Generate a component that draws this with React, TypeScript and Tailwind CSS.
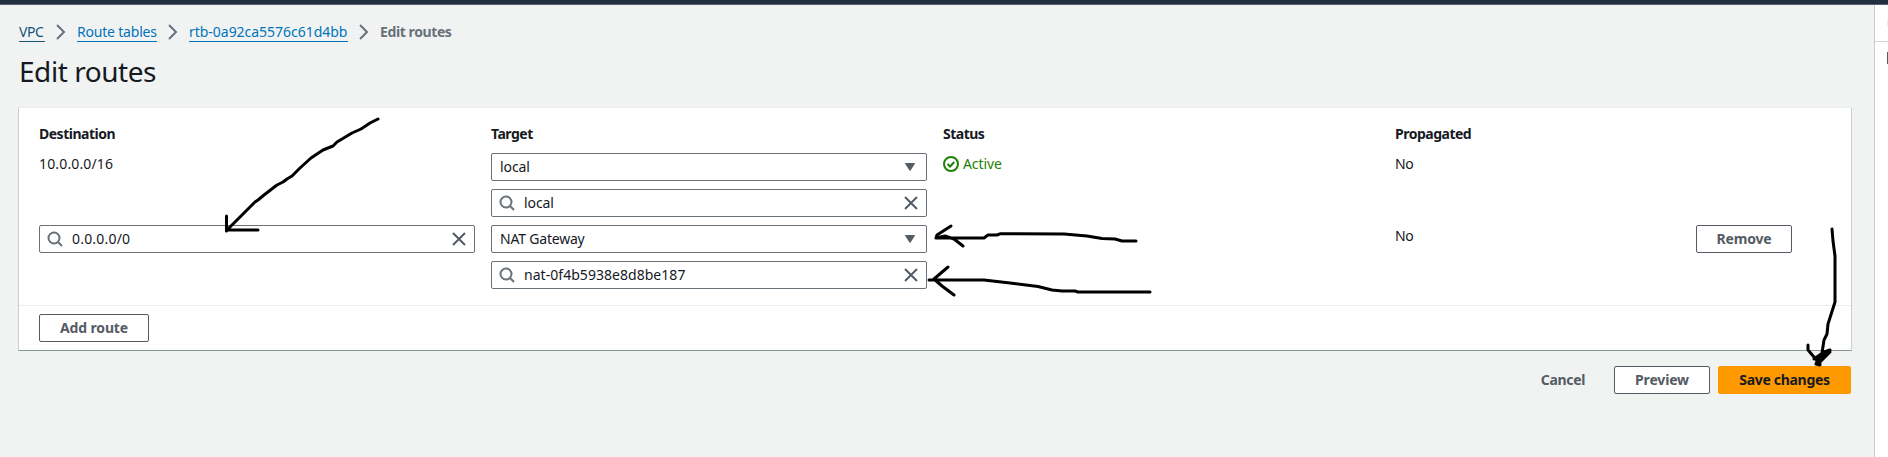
import React from 'react';

const SearchIcon = () => (
  <svg width="16" height="16" viewBox="0 0 16 16" fill="none" stroke="#687078" strokeWidth="2" className="shrink-0">
    <circle cx="7" cy="7" r="5.5" />
    <path d="M11 11l4 4" />
  </svg>
);

const CloseIcon = () => (
  <svg width="16" height="16" viewBox="0 0 16 16" fill="none" stroke="#545b64" strokeWidth="2" className="shrink-0">
    <path d="M2 2l12 12M14 2L2 14" />
  </svg>
);

const Caret = () => (
  <svg width="16" height="16" viewBox="0 0 16 16" fill="#545b64" stroke="#545b64" strokeWidth="1" strokeLinejoin="round" className="shrink-0">
    <path d="M3.5 4.5h9L8 11.5z" />
  </svg>
);

const Chevron = () => (
  <svg width="16" height="16" viewBox="0 0 16 16" fill="none" stroke="#687078" strokeWidth="2" className="shrink-0">
    <path d="M4 1l7 7-7 7" />
  </svg>
);

const CheckCircle = () => (
  <svg width="16" height="16" viewBox="0 0 16 16" fill="none" stroke="#1d8102" strokeWidth="2" className="shrink-0">
    <circle cx="8" cy="8" r="7" />
    <path d="M4.5 8l2.6 2.5L11.2 6" />
  </svg>
);

function SearchInput({ value, spacing }: { value: string; spacing: string }) {
  return (
    <div className="flex h-7 w-full items-center rounded-[2px] border border-[#687078] bg-white pr-[7px] pl-[7px]">
      <SearchIcon />
      <span className={`ml-[9px] flex-1 ${spacing}`}>{value}</span>
      <CloseIcon />
    </div>
  );
}

function Select({ value, spacing }: { value: string; spacing: string }) {
  return (
    <div className="flex h-7 w-full items-center rounded-[2px] border border-[#687078] bg-white pr-2 pl-2">
      <span className={`flex-1 ${spacing}`}>{value}</span>
      <Caret />
    </div>
  );
}

function Button({ children, className }: { children: React.ReactNode; className: string }) {
  return (
    <button className={`flex h-7 items-center justify-center rounded-[2px] border font-bold whitespace-nowrap ${className}`}>
      {children}
    </button>
  );
}

const outline = 'border-[#545b64] bg-white text-[#545b64] tracking-[-0.15px]';
const grid = 'grid grid-cols-[436px_436px_436px_285px_96px] gap-x-4 px-5';
const link = 'h-[19px] border-b leading-[18px] border-[#0073bb] text-[#0073bb]';

export default function App() {
  return (
    <div className="relative flex h-[457px] w-full flex-col overflow-hidden bg-[#f1f3f3] font-['Noto_Sans',sans-serif] text-sm leading-5 text-[#16191f]">
      <header className="h-[5px] shrink-0 border-b border-[#545f6b] bg-[#232f3e]" />
      <div className="flex flex-1">
        <main className="w-[1874px] shrink-0 pr-[23px] pl-[19px]">
          <nav className="mt-[18px] flex h-[20px] items-start whitespace-nowrap">
            <a className="h-[19px] w-[26px] border-b border-[#16537a] leading-[18px] tracking-[-0.4px] text-[#16537a]">VPC</a>
            <span className="mx-2 mt-px w-4"><Chevron /></span>
            <a className={`w-[80px] tracking-[-0.2px] ${link}`}>Route tables</a>
            <span className="mx-2 mt-px w-4"><Chevron /></span>
            <a className={`w-[159px] tracking-[-0.03px] ${link}`}>rtb-0a92ca5576c61d4bb</a>
            <span className="mx-2 mt-px w-4"><Chevron /></span>
            <span className="leading-[18px] font-bold tracking-[-0.4px] text-[#687078]">Edit routes</span>
          </nav>
          <h1 className="mt-[10px] h-[37px] text-[28px] leading-9 tracking-[-0.45px]">Edit routes</h1>
          <section className="-mx-px mt-[17px] flex h-[244px] flex-col border border-t-[#eaeded] border-r-[#c8d0d0] border-b-[#879596] border-l-[#c8d0d0] bg-white">
            <div className="h-[197px] pt-4">
              <div className={`${grid} font-bold tracking-[-0.5px]`}>
                <span>Destination</span>
                <span>Target</span>
                <span>Status</span>
                <span>Propagated</span>
              </div>
              <div className={`${grid} mt-[9px] h-[72px]`}>
                <span className="pt-px tracking-[0.15px]">10.0.0.0/16</span>
                <div className="flex flex-col gap-2">
                  <Select value="local" spacing="tracking-[-0.1px]" />
                  <SearchInput value="local" spacing="tracking-[-0.1px]" />
                </div>
                <span className="flex items-start gap-1 pt-px tracking-[-0.1px] text-[#1d8102]">
                  <span className="mt-0.5"><CheckCircle /></span>Active
                </span>
                <span className="pt-px tracking-[-0.4px]">No</span>
              </div>
              <div className={`${grid} h-[72px]`}>
                <SearchInput value="0.0.0.0/0" spacing="tracking-[0.2px]" />
                <div className="flex flex-col gap-2">
                  <Select value="NAT Gateway" spacing="tracking-[-0.2px]" />
                  <SearchInput value="nat-0f4b5938e8d8be187" spacing="tracking-[0.04px]" />
                </div>
                <span />
                <span className="pt-px tracking-[-0.4px]">No</span>
                <Button className={`w-24 ${outline}`}>Remove</Button>
              </div>
            </div>
            <div className="flex flex-1 items-start border-t border-[#eaeded] px-5 pt-2">
              <Button className={`w-[110px] ${outline}`}>Add route</Button>
            </div>
          </section>
          <div className="mt-[15px] flex justify-end gap-2">
            <Button className="w-[86px] border-transparent tracking-[-0.3px] text-[#545b64]">Cancel</Button>
            <Button className={`w-24 ${outline}`}>Preview</Button>
            <Button className="w-[133px] border-[#ff9900] bg-[#ff9900] tracking-[-0.3px] text-[#16191f]">Save changes</Button>
          </div>
        </main>
        <aside className="flex-1 border-l border-[#c4cccc] bg-white">
          <div className="flex h-[37px] justify-end border-b border-[#d0d4d4] pt-[15px]">
            <span className="h-1.5 w-px bg-[#eaeded]" />
          </div>
          <div className="flex justify-end pt-2.5">
            <span className="h-3 w-px bg-[#545b64]" />
          </div>
        </aside>
      </div>
      <svg className="pointer-events-none absolute inset-0" width="1888" height="457" viewBox="0 0 1888 457" fill="none" stroke="#000" strokeWidth="3" strokeLinecap="round" strokeLinejoin="round">
        <path d="M378 119L370 123L361 129L352 133L337 142L333 146L323 150L311 158L300 168L292 176L287 179L283 182L277 185L264 195L258 200L255 202L240 217L227 230M226.500 216V231M229 230H258" />
        <path d="M1136 241H1122L1115 239L1102 238.500L1087 236L1064 234L1000 233.800L997 235H988L984 238H937M951 226L937 235L936 238L945 236L954 239L963 246" />
        <path d="M1150 292H1078L1075 291H1062L1052 290L1038 286.500L1010 283L984 280H929M948 267L934 279L942 286L954 295" />
        <path d="M1832 229L1833 241L1835 256V302L1828 324L1827 334L1824 340L1822 353L1817 364M1808 345V350L1814 357L1820 364M1830 350L1824 352L1814 359L1821 357L1830 352L1820 362L1819 356L1816 364L1820 365" />
      </svg>
    </div>
  );
}
